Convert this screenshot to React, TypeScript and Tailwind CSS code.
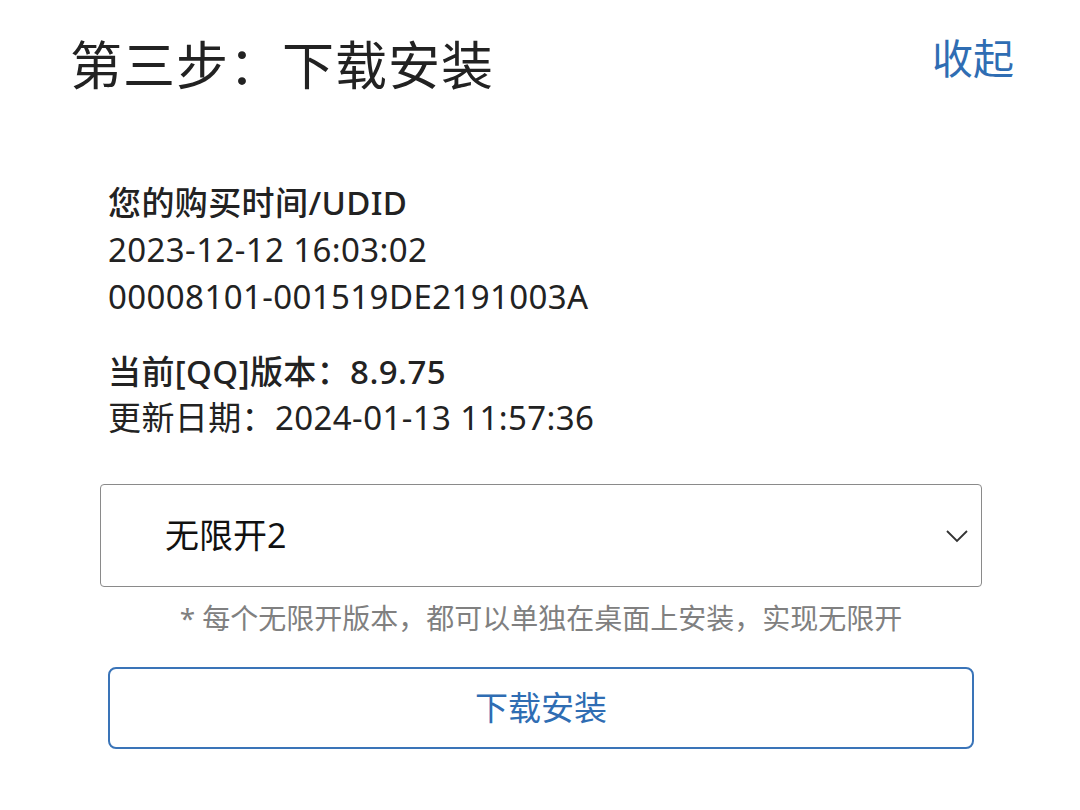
export default function App() {
    return (
        <div
            className="w-[1080px] h-[810px] bg-white text-[#222]"
            style={{ fontFamily: '"Noto Sans", "Noto Sans CJK SC", sans-serif' }}
        >
            {/* Header */}
            <div className="flex justify-between items-start pl-[70px] pr-[66px] pt-[32px]">
                <h1 className="text-[52px] leading-[66px] tracking-[1px]">第三步：下载安装</h1>
                <button className="text-[41px] leading-[52px] text-[#2f6db3]">收起</button>
            </div>

            <div className="pl-[100px] pr-[98px] mt-[81px]">
                {/* Purchase info */}
                <div className="pl-2 text-[33px] leading-[47px] tracking-[0.4px]">
                    <p className="font-medium">您的购买时间/UDID</p>
                    <p>2023-12-12 16:03:02</p>
                    <p>00008101-001519DE2191003A</p>
                </div>

                {/* Version info */}
                <div className="pl-2 mt-[29px] text-[33px] leading-[46px] tracking-[0.4px]">
                    <p className="font-medium">当前[QQ]版本：8.9.75</p>
                    <p>更新日期：2024-01-13 11:57:36</p>
                </div>

                {/* Select */}
                <div className="mt-[43px] h-[103px] border border-[#8a8a8a] rounded-[4px] flex items-center justify-between pl-[64px] pr-[12px]">
                    <span className="text-[34px] text-[#111]">无限开2</span>
                    <svg width="24" height="14" viewBox="0 0 24 14" fill="none" stroke="#333" strokeWidth="1.8">
                        <path d="M2 2l10 10L22 2" />
                    </svg>
                </div>
                <p className="mt-[13px] text-center text-[28px] leading-[36px] text-[#808080]">
                    * 每个无限开版本，都可以单独在桌面上安装，实现无限开
                </p>

                {/* Download button */}
                <button className="mt-[31px] mx-2 w-[866px] h-[82px] border-2 border-[#3a74b8] rounded-[8px] text-[33px] text-[#2f6db3]">
                    下载安装
                </button>
            </div>
        </div>
    );
}
